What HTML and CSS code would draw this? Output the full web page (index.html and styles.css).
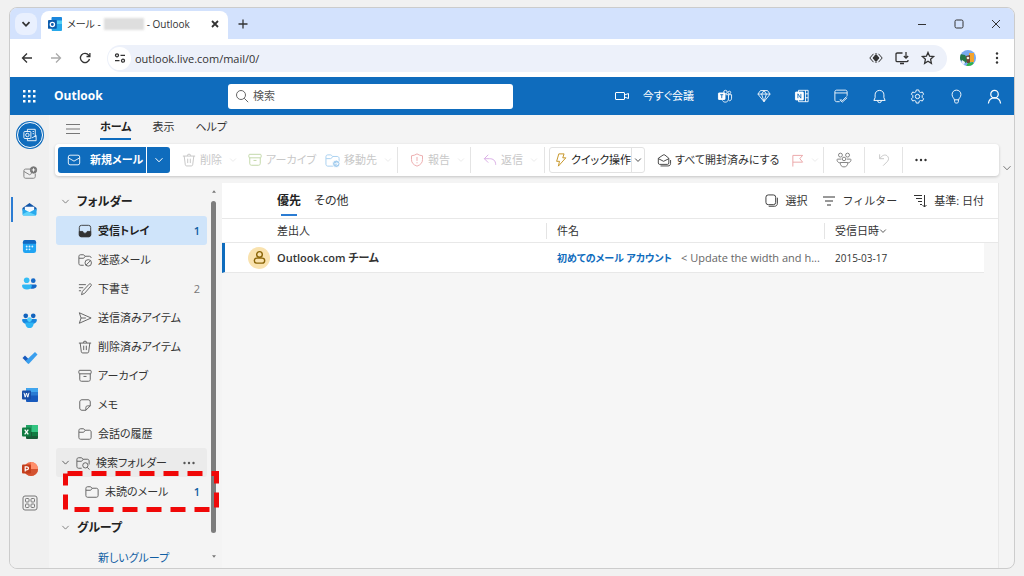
FILE: index.html
```html
<!DOCTYPE html>
<html lang="ja">
<head>
<meta charset="utf-8">
<title>メール - Outlook</title>
<link rel="stylesheet" href="styles.css">
</head>
<body>
<svg class="sprite" aria-hidden="true">
  <symbol id="chev" viewBox="0 0 10 10"><path d="M1.5 3.2 5 6.8 8.500 3.200"/></symbol>
  <symbol id="mail" viewBox="0 0 16 16"><rect x="1.500" y="2.500" width="13" height="11" rx="2"/><path d="M1.500 5.500 8 9.300l6.500-3.800"/></symbol>
  <symbol id="trash" viewBox="0 0 16 16"><path d="M1 3.500h14M6 3.300a2 2 0 0 1 4 0M2.500 3.500l1.300 10c.1.800.7 1.300 1.500 1.300h5.400c.800 0 1.400-.5 1.500-1.300l1.300-10M6.500 6.500v5M9.500 6.500v5"/></symbol>
  <symbol id="archive" viewBox="0 0 16 16"><rect x="1" y="1.500" width="14" height="4" rx="1"/><path d="M2 5.500v6.500c0 1.200.8 2 2 2h8c1.200 0 2-.8 2-2V5.500M6.300 8.500h3.400"/></symbol>
  <symbol id="folder" viewBox="0 0 16 16"><path d="M1 4c0-1.200.8-2 2-2h2.800c.5 0 .9.200 1.200.5l1.200 1.200H13c1.200 0 2 .8 2 2V12c0 1.200-.8 2-2 2H3c-1.200 0-2-.8-2-2zM1.200 6h4.600c.5 0 .9-.2 1.200-.5l1.200-1.800"/></symbol>
  <symbol id="person" viewBox="0 0 16 16"><circle cx="8" cy="5.500" r="4"/><path d="M1.500 15.500c.5-4 3-6 6.500-6s6 2 6.500 6"/></symbol>
  <symbol id="people" viewBox="0 0 18 18"><circle cx="5" cy="3.500" r="2.200"/><circle cx="13" cy="3.500" r="2.200"/><circle cx="9" cy="7.800" r="2"/><path d="M6 8H2c-1 0-1 1-.6 2 .7 1.500 1.700 2.200 3 2.200M12 8h4c1 0 1 1 .6 2-.7 1.500-1.700 2.200-3 2.200M4.700 11.800h8.600c0 3-1.500 5-4.300 5s-4.300-2-4.300-5z"/></symbol>
</svg>

<div class="window">
  <div class="tabstrip">
    <button class="tabsearch" aria-label="タブを検索"><svg viewBox="0 0 10 10" class="i10 heavy"><use href="#chev"/></svg></button>
    <div class="tab">
      <svg viewBox="0 0 16 16" class="i14 solid"><rect x="4" y="0" width="12" height="8" rx="1" fill="#1b87dc"/><rect x="10" y="4" width="6" height="5" fill="#54d0f5"/><path d="M3 8h13v6.500c0 1-.5 1.500-1.500 1.500h-10z" fill="#27a8ea"/><rect x="0" y="3.500" width="10" height="10" rx="1" fill="#0b5cad"/><circle cx="5" cy="8.500" r="2.400" fill="none" stroke="#fff" stroke-width="1.500"/></svg>
      <span class="tabtitle">メール -</span><span class="masked"></span><span class="tabtitle grow">- Outlook</span>
      <button class="close" aria-label="タブを閉じる"><svg viewBox="0 0 10 10" class="i10 heavy"><path d="M2 2l6 6M8 2 2 8"/></svg></button>
    </div>
    <button class="newtab" aria-label="新しいタブ"><svg viewBox="0 0 10 10" class="i10 mid"><path d="M5 .5v9M.5 5h9"/></svg></button>
    <div class="winctl">
      <button aria-label="最小化"><svg viewBox="0 0 10 10" class="i10"><path d="M1 5.500h8"/></svg></button>
      <button aria-label="最大化"><svg viewBox="0 0 10 10" class="i10"><rect x="1" y="1" width="8" height="8" rx="1.500"/></svg></button>
      <button aria-label="閉じる"><svg viewBox="0 0 10 10" class="i10"><path d="M1 1l8 8M9 1 1 9"/></svg></button>
    </div>
  </div>

  <div class="navbar">
    <button aria-label="戻る"><svg viewBox="0 0 12 12" class="i12 mid"><path d="M11 6H1.500M6 1.500 1.500 6 6 10.500"/></svg></button>
    <button class="off" aria-label="進む"><svg viewBox="0 0 12 12" class="i12 mid"><path d="M1 6h9.500M6 1.500 10.500 6 6 10.500"/></svg></button>
    <button aria-label="再読み込み"><svg viewBox="0 0 12 12" class="i12 mid"><path d="M10.500 7A4.600 4.600 0 1 1 9.700 3.200L10.800 4.400M10.900 1v3.500H7.500"/></svg></button>
    <div class="omnibox">
      <span class="siteinfo"><svg viewBox="0 0 12 12" class="i12 mid"><circle cx="3" cy="3.300" r="1.500"/><path d="M6.500 3.300h4.500M1 8.700h4.500"/><circle cx="9" cy="8.700" r="1.500"/></svg></span>
      <input class="url" aria-label="アドレス" value="outlook.live.com/mail/0/">
      <svg viewBox="0 0 14 12" class="i14"><path d="M4.500 1.800.8 6l3.700 4.200M9.500 1.800 13.200 6 9.500 10.200M7 1v10"/><path class="fill" d="M6.500 3 4 6l2.500 3zM7.500 3 10 6 7.500 9z"/></svg>
      <svg viewBox="0 0 14 14" class="i14 mid"><path d="M7.500 2H2.300C1.500 2 1 2.500 1 3.200v6.300c0 .7.500 1.200 1.300 1.200h9.400c.8 0 1.300-.5 1.300-1.200V9M5 12.500h4M11 1v6M8.800 5 11 7.200 13.200 5"/></svg>
      <svg viewBox="0 0 14 14" class="i14 mid"><path d="M7 1.500l1.600 3.700 4 .4-3 2.700.8 4L7 10.200l-3.400 2.100.8-4-3-2.700 4-.4z"/></svg>
    </div>
    <svg viewBox="0 0 16 16" class="i16 solid"><clipPath id="av"><circle cx="8" cy="8" r="8"/></clipPath><g clip-path="url(#av)"><rect width="16" height="16" fill="#78a9f0"/><path d="M0 4l5 1 3 5-2 3-6-3z" fill="#267848"/><rect x="9" y="3" width="5" height="9" fill="#f3a32d"/><path d="M6 6l4-1v8H7z" fill="#6d4637"/><circle cx="8" cy="8" r="1.300" fill="#f5eee0"/><path d="M8 13l5-1 1 4H6z" fill="#30b548"/><path d="M2 10l3 2-1 3H1z" fill="#e9f0fa"/></g></svg>
    <button class="more" aria-label="メニュー"><svg viewBox="0 0 12 12" class="i12 solid"><g fill="#333"><circle cx="6" cy="1.500" r="1.200"/><circle cx="6" cy="6" r="1.200"/><circle cx="6" cy="10.500" r="1.200"/></g></svg></button>
  </div>

  <header class="suite">
    <button class="waffle" aria-label="アプリ起動ツール"><svg viewBox="0 0 13 13" class="i13 solid"><g fill="#fff"><rect width="2.500" height="2.500"/><rect x="5" width="2.500" height="2.500"/><rect x="10" width="2.500" height="2.500"/><rect y="5" width="2.500" height="2.500"/><rect x="5" y="5" width="2.500" height="2.500"/><rect x="10" y="5" width="2.500" height="2.500"/><rect y="10" width="2.500" height="2.500"/><rect x="5" y="10" width="2.500" height="2.500"/><rect x="10" y="10" width="2.500" height="2.500"/></g></svg></button>
    <a class="brand" href="#">Outlook</a>
    <label class="search"><svg viewBox="0 0 14 14" class="i14"><circle cx="6" cy="6" r="4.500"/><path d="M9.200 9.200l4 4"/></svg><input type="text" aria-label="検索" placeholder="検索"></label>
    <button class="meet"><svg viewBox="0 0 14 8" class="vid"><rect x=".5" y=".5" width="9" height="7" rx=".5"/><path d="M9.500 3l4-1.500v5l-4-1.500z"/></svg>今すぐ会議</button>
    <div class="suiteicons">
      <button aria-label="Teams"><svg viewBox="0 0 16 16" class="i14"><circle cx="8.500" cy="3.500" r="2"/><circle cx="13" cy="4" r="1.500"/><path d="M9 6.500h6.500v4c0 1.800-1 3-2.800 3M5 13c.7 1.300 1.900 2 3.300 2 2.200 0 3.700-1.500 3.700-3.700V6.500"/><rect class="white" x=".5" y="4.500" width="7.500" height="7.500" rx=".6"/><path d="M2.500 6.500H6M4.300 6.500v4" stroke="#0f6cbd"/></svg></button>
      <button aria-label="Premium"><svg viewBox="0 0 16 16" class="i14"><path d="M4 1.800h8l3 4L8 14.500 1 5.800zM1 5.800h14M5.300 5.800 8 14.500l2.700-8.700L8 1.800z"/></svg></button>
      <button aria-label="OneNote"><svg viewBox="0 0 16 16" class="i14"><path d="M4 4V1.500h11v13H4V12M12 1.500v13M12 5.500h3M12 10h3"/><rect class="white" x=".5" y="3.500" width="9" height="9" rx=".6"/><path d="M3.300 10.500v-5l3.400 5v-5" stroke="#0f6cbd"/></svg></button>
      <button aria-label="タスク"><svg viewBox="0 0 16 16" class="i14"><path d="M1 4.500h14M6.500 14.500H3c-1.200 0-2-.8-2-2V3.300c0-1.200.8-2 2-2h10c1.200 0 2 .8 2 2v4.500M7.500 11.500l2 2 5-5M6.500 12.500l3 2.500 5.500-5"/></svg></button>
      <button aria-label="通知"><svg viewBox="0 0 16 16" class="i15"><path d="M8 1.500c-2.800 0-4.700 2-4.700 4.700v3L2 12.200h12l-1.300-3v-3c0-2.700-1.900-4.700-4.700-4.700zM6 12.500a2 2 0 0 0 4 0"/></svg></button>
      <button aria-label="設定"><svg viewBox="0 0 16 16" class="i15"><circle cx="8" cy="8" r="2.300"/><path d="M6.700 1h2.600l.5 2 1.400.8 2-.6 1.300 2.300L13 7v2l1.500 1.500-1.300 2.300-2-.6-1.400.8-.5 2H6.700l-.5-2-1.400-.8-2 .6-1.300-2.300L3 9V7L1.500 5.500l1.300-2.300 2 .6L6.200 3z"/></svg></button>
      <button aria-label="ヒント"><svg viewBox="0 0 16 16" class="i15"><path d="M5.700 11.500C5.500 9.800 3.300 8.900 3.300 5.800A4.600 4.600 0 0 1 8 1.200a4.600 4.600 0 0 1 4.700 4.600c0 3.100-2.200 4-2.400 5.700zM6 11.500v2c0 1 .7 1.500 2 1.500s2-.5 2-1.500v-2"/></svg></button>
      <button aria-label="アカウント"><svg viewBox="0 0 16 16" class="i15 mid"><use href="#person"/></svg></button>
    </div>
  </header>

  <div class="app">
    <nav class="rail" aria-label="アプリ">
      <a href="#" class="first" aria-label="Outlook"><span class="disc"><svg viewBox="0 0 16 16" class="i14"><path d="M5 4V1.500h9v9M5 12v2.500h10V8.500l-5 3"/><rect x="1" y="4" width="8" height="8" rx="1"/><circle cx="5" cy="8" r="2"/><path d="M11 4h1.500M11 6.500h1.500"/></svg></span></a>
      <a href="#" aria-label="新しいメール"><svg viewBox="0 0 16 16" class="i14 gray"><path d="M8.500 3.500H3c-1.200 0-2 .8-2 2V12c0 1.200.8 2 2 2h9c1.200 0 2-.8 2-2V8.500M1.200 6.300 7.500 10l2.500-1.500"/><circle cx="12" cy="4.500" r="3.700" fill="#777"/><path d="M12 2.500v4M10 4.500h4" stroke="#fff"/></svg></a>
      <a href="#" class="current" aria-label="メール"><svg viewBox="0 0 16 16" class="i15 solid"><path d="M.5 6.500 8 1l7.500 5.500V9H.5z" fill="#1456a8"/><path d="M3 5h10v6H3z" fill="#f4faff"/><path d="M.5 7 8 11l7.500-4v5.500c0 1.300-.7 2-2 2h-11c-1.300 0-2-.7-2-2z" fill="#29a9ed"/><path d="M6 10l9 4c-.4.400-.9.500-1.500.5h-11c-1 0-1.700-.5-2-1.400z" fill="#5fd3fb"/></svg></a>
      <a href="#" aria-label="予定表"><svg viewBox="0 0 16 16" class="i15 solid"><rect x="1" y="1" width="14" height="14" rx="2.500" fill="#20a4f3"/><path d="M1 5V3.500C1 2 2 1 3.500 1h9C14 1 15 2 15 3.500V5z" fill="#1267bf"/><g fill="#d9f3ff"><circle cx="5" cy="8" r="1"/><circle cx="8" cy="8" r="1"/><circle cx="11" cy="8" r="1"/><circle cx="5" cy="11" r="1"/><circle cx="8" cy="11" r="1"/></g></svg></a>
      <a href="#" aria-label="連絡先"><svg viewBox="0 0 16 16" class="i15 solid"><circle cx="5" cy="4.500" r="3" fill="#35bdf5"/><circle cx="12" cy="5" r="2.500" fill="#1569c7"/><path d="M9 9h5c1 0 1.700.6 1.700 1.500 0 1.700-1.500 3-3.700 3H9z" fill="#1569c7"/><path d="M1.500 9H9c.9 0 1.500.6 1.500 1.500 0 2.500-2 4-5.200 4S0 13 0 10.500C0 9.600.6 9 1.500 9z" fill="#30b7f4"/></svg></a>
      <a href="#" aria-label="グループ"><svg viewBox="0 0 16 16" class="i15 solid"><circle cx="4" cy="3" r="2.500" fill="#1263bd"/><circle cx="12" cy="3" r="2.500" fill="#1263bd"/><path d="M1 6.500h14c1 0 1 1 .7 2-.6 2-2.200 3-4.700 3H5c-2.500 0-4.100-1-4.700-3-.3-1-.3-2 .7-2z" fill="#1988df"/><circle cx="8" cy="7" r="2.500" fill="#54d1fa"/><path d="M3.500 10h9c0 3.500-1.500 6-4.500 6s-4.500-2.500-4.500-6z" fill="#2db5f6"/></svg></a>
      <a href="#" aria-label="To Do"><svg viewBox="0 0 16 16" class="i16 solid"><path d="M.5 8 3 5.500l5 5L5.700 13z" fill="#195abd"/><path d="M5.700 13.500 3.500 11 13 2l2.500 2.500-8.300 9c-.5.500-1 .5-1.500 0z" fill="#3a9fee"/></svg></a>
      <a href="#" aria-label="Word"><svg viewBox="0 0 16 16" class="i16 solid"><rect x="4" y="1" width="12" height="14" rx="1" fill="#185abd"/><path d="M4 5V2c0-.6.4-1 1-1h10c.6 0 1 .4 1 1v3z" fill="#41a5ee"/><rect x="4" y="5" width="12" height="3.500" fill="#2b7cd3"/><rect x="0" y="3.500" width="9" height="9" rx="1" fill="#184fa8"/><path d="M2 5.800l1.200 4.400L4.500 6l1.300 4.200L7 5.800" fill="none" stroke="#fff"/></svg></a>
      <a href="#" aria-label="Excel"><svg viewBox="0 0 16 16" class="i16 solid"><rect x="4" y="1" width="12" height="14" rx="1" fill="#185c37"/><rect x="4" y="1" width="6" height="7" fill="#21a366"/><rect x="10" y="1" width="6" height="7" fill="#33c481"/><rect x="10" y="8" width="6" height="4" fill="#107c41"/><rect x="0" y="3.500" width="9" height="9" rx="1" fill="#107c41"/><path d="M2.700 5.700l3.600 4.600M6.300 5.700l-3.600 4.600" stroke="#fff" stroke-width="1.300"/></svg></a>
      <a href="#" aria-label="PowerPoint"><svg viewBox="0 0 16 16" class="i16 solid"><circle cx="9" cy="8" r="7" fill="#ed6c47"/><path d="M9 1a7 7 0 0 1 7 7H9z" fill="#ff8f6b"/><path d="M2 8h14A7 7 0 0 1 2 8z" fill="#d35230"/><rect x="0" y="3.500" width="9" height="9" rx="1" fill="#c43e1c"/><path d="M3.200 10.500V5.800h1.600c2.200 0 2.200 3 0 3H3.500" fill="none" stroke="#fff" stroke-width="1.200"/></svg></a>
      <a href="#" class="last" aria-label="その他のアプリ"><svg viewBox="0 0 16 16" class="i16 gray"><rect x="1" y="1" width="14" height="14" rx="2"/><rect x="3.500" y="3.500" width="3.500" height="3.500" rx=".8"/><rect x="9" y="3.500" width="3.500" height="3.500" rx=".8"/><rect x="3.500" y="9" width="3.500" height="3.500" rx=".8"/><rect x="9" y="9" width="3.500" height="3.500" rx=".8"/></svg></a>
    </nav>

    <div class="work">
      <div class="ribbontabs">
        <button class="burger" aria-label="ナビゲーション"><svg viewBox="0 0 14 12" class="i14 gray"><path d="M0 1.500h14M0 6h14M0 10.500h14"/></svg></button>
        <button class="rt active">ホーム</button><button class="rt">表示</button><button class="rt">ヘルプ</button>
      </div>
      <div class="ribbonrow">
        <div class="ribbon">
          <div class="newmail"><button class="primary"><svg viewBox="0 0 16 16" class="i14"><use href="#mail"/></svg>新規メール</button><button class="primary drop" aria-label="新規作成オプション"><svg viewBox="0 0 10 10" class="i10"><use href="#chev"/></svg></button></div>
          <button class="cmd" disabled><svg viewBox="0 0 16 16" class="i14 gray"><use href="#trash"/></svg>削除<svg viewBox="0 0 10 10" class="i8"><use href="#chev"/></svg></button>
          <button class="cmd" disabled><svg viewBox="0 0 16 16" class="i14 green"><use href="#archive"/></svg>アーカイブ</button>
          <button class="cmd sep" disabled><svg viewBox="0 0 16 16" class="i15 blue"><use href="#folder"/><circle cx="12" cy="11.500" r="4" fill="#3a94dd" stroke="#fff"/><path d="M10 11.500h4M12.300 9.800l1.700 1.700-1.700 1.700" stroke="#fff"/></svg>移動先<svg viewBox="0 0 10 10" class="i8"><use href="#chev"/></svg></button>
          <button class="cmd sep" disabled><svg viewBox="0 0 16 16" class="i14 red"><path d="M8 1c2 1.300 4 2 6.300 2.200V7.500c0 3.500-2 6-6.300 7.500-4.300-1.500-6.300-4-6.300-7.500V3.200C4 3 6 2.300 8 1zM8 4.500v4.500M8 10.500v1.300"/></svg>報告<svg viewBox="0 0 10 10" class="i8"><use href="#chev"/></svg></button>
          <button class="cmd sep" disabled><svg viewBox="0 0 16 16" class="i14 purple"><path d="M6 2 1.500 6.500 6 11M1.500 6.500h6c4 0 7 2 7 7"/></svg>返信<svg viewBox="0 0 10 10" class="i8"><use href="#chev"/></svg></button>
          <div class="quick"><button><svg viewBox="0 0 14 16" class="i14 gold"><path d="M4.500 1h6L9 5.500h3.500L4 15l1.300-5.500H2z"/></svg>クイック操作</button><button class="qdrop" aria-label="クイック操作オプション"><svg viewBox="0 0 10 10" class="i8"><use href="#chev"/></svg></button></div>
          <button class="cmd"><svg viewBox="0 0 16 16" class="i14"><path d="M1.500 6 7 2.300c.6-.4 1.400-.4 2 0L13.500 6v5.500c0 1-.7 1.500-1.500 1.500H3c-.8 0-1.500-.5-1.500-1.500zM1.700 6.500 7.500 9.500l6-3M4 14.800h8.500c2 0 3-1 3-3V8"/></svg>すべて開封済みにする</button>
          <button class="cmd sep" disabled aria-label="フラグ"><svg viewBox="0 0 14 14" class="i13 red"><path d="M2 13.500v-12h10.500L9.500 5l3 3.800H2"/></svg><svg viewBox="0 0 10 10" class="i8"><use href="#chev"/></svg></button>
          <button class="cmd sep" aria-label="グループ"><svg viewBox="0 0 18 18" class="i16 gray"><use href="#people"/></svg></button>
          <button class="cmd sep" disabled aria-label="元に戻す"><svg viewBox="0 0 14 16" class="i14 gray"><path d="M2 1.500v5h5M2.200 6.300C5 2.500 8 1.500 10.300 3c2.300 1.600 2.500 4.500.7 6.500l-5 5"/></svg></button>
          <button class="cmd" aria-label="その他"><svg viewBox="0 0 12 12" class="i12 solid"><circle cx="1.500" cy="6" r="1.200"/><circle cx="6" cy="6" r="1.200"/><circle cx="10.500" cy="6" r="1.200"/></svg></button>
        </div>
        <button class="collapse" aria-label="リボンの表示"><svg viewBox="0 0 10 10" class="i10 gray"><use href="#chev"/></svg></button>
      </div>

      <div class="panes">
        <div class="folders">
          <div class="tree">
            <button class="group"><svg viewBox="0 0 10 10" class="i9 gray"><use href="#chev"/></svg>フォルダー</button>
            <a href="#" class="row selected"><svg viewBox="0 0 16 16" class="i14"><rect x="1.500" y="1.500" width="13" height="13" rx="2.500"/><path class="fill" d="M1.500 8.500H5.500c.4 1.400 1.200 2 2.500 2s2.100-.6 2.500-2h4v4c0 1.200-.8 2-2 2h-9c-1.200 0-2-.8-2-2z"/></svg><span>受信トレイ</span><b>1</b></a>
            <a href="#" class="row"><svg viewBox="0 0 16 16" class="i14"><path d="M6.500 14H3c-1.200 0-2-.8-2-2V4c0-1.200.8-2 2-2h2.800c.5 0 .9.200 1.200.5l1.200 1.200H13c1.200 0 2 .8 2 2M1.200 6h4.600c.5 0 .9-.2 1.200-.5l1.200-1.800"/><circle cx="11.700" cy="11.300" r="3.700"/><path d="M9.200 13.800l5-5"/></svg><span>迷惑メール</span></a>
            <a href="#" class="row"><svg viewBox="0 0 16 16" class="i14"><path d="M1 3h8M1 6.500h5M1 10h2.500M4 14.500l1-3.700 7.700-8.300c.6-.7 1.500-.7 2.100-.1s.6 1.500 0 2.100L7.500 13z"/></svg><span>下書き</span><i>2</i></a>
            <a href="#" class="row"><svg viewBox="0 0 16 16" class="i14"><path d="M1.500 2 15 8 1.500 14l2-6zM3.500 8H9"/></svg><span>送信済みアイテム</span></a>
            <a href="#" class="row"><svg viewBox="0 0 16 16" class="i14"><use href="#trash"/></svg><span>削除済みアイテム</span></a>
            <a href="#" class="row"><svg viewBox="0 0 16 16" class="i14"><use href="#archive"/></svg><span>アーカイブ</span></a>
            <a href="#" class="row"><svg viewBox="0 0 16 16" class="i14"><path d="M4.500 2h7c1.500 0 2.500 1 2.500 2.500V9l-5 5H4.500C3 14 2 13 2 11.500v-7C2 3 3 2 4.500 2zM14 9h-3c-1.300 0-2 .7-2 2v3"/></svg><span>メモ</span></a>
            <a href="#" class="row"><svg viewBox="0 0 16 16" class="i14"><use href="#folder"/></svg><span>会話の履歴</span></a>
            <a href="#" class="row searchf"><svg viewBox="0 0 10 10" class="i9 gray"><use href="#chev"/></svg><svg viewBox="0 0 16 16" class="i14"><path d="M6.500 14H3c-1.200 0-2-.8-2-2V4c0-1.200.8-2 2-2h2.800c.5 0 .9.200 1.200.5l1.200 1.200H13c1.200 0 2 .8 2 2v4M1.200 6h4.600c.5 0 .9-.2 1.200-.5l1.200-1.800M13 13l2.300 2.500"/><circle cx="10.700" cy="10.700" r="3"/></svg><span>検索フォルダー</span><svg viewBox="0 0 12 12" class="i12 solid"><circle cx="1.500" cy="6" r="1.200"/><circle cx="6" cy="6" r="1.200"/><circle cx="10.500" cy="6" r="1.200"/></svg></a>
            <a href="#" class="row child"><svg viewBox="0 0 16 16" class="i14"><use href="#folder"/></svg><span>未読のメール</span><b>1</b>
              <svg class="callout" viewBox="0 0 156 41"><rect x="2.500" y="2.500" width="151" height="36"/></svg></a>
            <button class="group second"><svg viewBox="0 0 10 10" class="i9 gray"><use href="#chev"/></svg>グループ</button>
            <a href="#" class="newgroup">新しいグループ</a>
          </div>
          <div class="scroll"><svg viewBox="0 0 6 4"><path d="M0 4 3 0l3 4z"/></svg><div class="thumb"></div><svg viewBox="0 0 6 4"><path d="M0 0h6L3 4z"/></svg></div>
        </div>

        <main class="messages">
          <div class="listhead">
            <button class="pivot active">優先</button><button class="pivot">その他</button>
            <div class="listtools">
              <button><svg viewBox="0 0 14 14" class="i13"><rect x="1" y="1" width="10.500" height="10.500" rx="2.500"/><path d="M4 13.200h6c2.200 0 3.300-1.100 3.300-3.300V4"/></svg>選択</button>
              <button><svg viewBox="0 0 12 12" class="i12"><path d="M0 2h12M2 6h8M4 10h4"/></svg>フィルター</button>
              <button><svg viewBox="0 0 14 14" class="i14"><path d="M1 1.500h8M3 4.500h6M5 7.500h4M7 10.500h2M11.500 1v12M9.500 11l2 2 2-2"/></svg>基準: 日付</button>
            </div>
          </div>
          <table>
            <thead><tr><th class="c1">差出人</th><th class="c2"><span>件名</span></th><th class="c3"><span>受信日時<svg viewBox="0 0 10 10" class="i8"><use href="#chev"/></svg></span></th><th class="c4"></th></tr></thead>
            <tbody><tr><td class="c1"><div class="sender"><span class="avatar"><svg viewBox="0 0 16 16" class="i15"><circle cx="8" cy="4.700" r="3"/><rect x="2.500" y="8.700" width="11" height="5.300" rx="2.600"/></svg></span>Outlook.com チーム</div></td><td class="c2"><div class="subj"><a href="#">初めてのメール アカウント</a><span>&lt; Update the width and h...</span></div></td><td class="c3">2015-03-17</td><td class="c4"></td></tr></tbody>
          </table>
        </main>
      </div>
    </div>
  </div>
</div>
</body>
</html>
```
FILE: styles.css
```css
* { box-sizing: border-box; }
body {
  margin: 0;
  height: 100vh;
  padding: 7px 9px;
  background: #f1f1f1;
  color: #333;
  font: 11px/16px "Open Sans", "Noto Sans CJK JP", sans-serif;
  font-feature-settings: "palt";
}
button, input {
  margin: 0; padding: 0; border: 0; background: none;
  font: inherit; font-feature-settings: inherit; color: inherit;
  outline: 0;
}
button { display: flex; align-items: center; white-space: nowrap; }
a { color: inherit; text-decoration: none; }
svg { fill: none; stroke: currentColor; stroke-width: 1; flex: none; display: block; overflow: visible; }
.sprite { position: absolute; width: 0; height: 0; }
.solid { stroke: none; fill: currentColor; }
.fill { fill: currentColor; }
.white { fill: #fff; }
.mid { stroke-width: 1.3px; }
.heavy { stroke-width: 1.8px; }
.i8 { width: 8px; height: 8px; }
.i9 { width: 9px; height: 9px; }
.i10 { width: 10px; height: 10px; }
.i12 { width: 12px; height: 12px; }
.i13 { width: 13px; height: 13px; }
.i14 { width: 14px; height: 14px; }
.i15 { width: 15px; height: 15px; }
.i16 { width: 16px; height: 16px; }
.gray { color: #777; }
.green { color: #6ba02c; }
.blue { color: #3a94dd; }
.red { color: #d13438; }
.purple { color: #a33cc0; }
.gold { color: #c08a10; }

.window {
  display: flex; flex-direction: column;
  height: 100%;
  border: 1px solid #ccc; border-radius: 8px;
  background: #f4f4f4;
  overflow: hidden;
}

/* browser chrome */
.tabstrip { display: flex; align-items: center; height: 31px; background: #d3e2fd; padding-left: 5px; flex: none; }
.tabsearch { width: 22px; height: 22px; border-radius: 8px; background: #e9f0fe; justify-content: center; }
.tab {
  display: flex; align-items: center; align-self: flex-end;
  width: 187px; height: 28px; margin-left: 4px; padding: 0 8px 3px 7px;
  background: #fff; border-radius: 8px 8px 0 0;
  font-size: 10px;
}
.tab .tabtitle { margin-left: 5px; white-space: nowrap; }
.tab .grow { flex: 1; margin-left: 3px; }
.masked { width: 40px; height: 12px; margin-left: 3px; background: #dedede; filter: blur(1px); }
.newtab { margin-left: 10px; }
.winctl { display: flex; margin-left: auto; }
.winctl button { width: 37px; justify-content: center; }
.navbar { display: flex; align-items: center; height: 38px; padding: 0 11px; background: #fff; flex: none; }
.navbar > button { width: 12px; margin-right: 17px; }
.navbar > button:nth-of-type(3) { margin-right: 16px; }
.navbar .off { color: #aaa; }
.navbar > .more { margin: 0 0 0 15px; }
.omnibox { display: flex; align-items: center; flex: 1; height: 27px; margin-right: 13px; padding: 0 12px 0 1px; gap: 12px; border-radius: 14px; background: #edf1fa; }
.siteinfo { display: grid; place-items: center; width: 23px; height: 23px; border-radius: 50%; background: #fff; }
.url { flex: 1; margin-left: -8px; height: 20px; }

/* suite header */
.suite { display: flex; align-items: center; height: 38px; background: #0f6cbd; color: #fff; flex: none; }
.waffle { width: 38px; justify-content: center; }
.brand { width: 174px; padding-left: 6px; font-size: 12px; font-weight: 700; }
.search { display: flex; align-items: center; width: 285px; height: 25px; margin-left: 6px; padding: 0 7px; gap: 4px; background: #fff; border-radius: 3px; color: #666; }
.search input { flex: 1; min-width: 0; }
.search input::placeholder { color: #555; opacity: 1; }
.meet { margin-left: auto; gap: 14px; }
.vid { width: 14px; height: 8px; }
.suiteicons { display: flex; width: 308px; margin-left: 12px; }
.suiteicons button { flex: 1; justify-content: center; }

.app { display: flex; flex: 1; min-height: 0; }
.rail { display: flex; flex-direction: column; width: 39px; background: #f0f0f0; flex: none; }
.rail a { display: flex; align-items: center; justify-content: center; height: 37px; flex: none; }
.rail .first { height: 39px; }
.rail .last { height: 32px; }
.rail .current { height: 25px; margin: 6px 0 6px 1px; padding-right: 3px; border-left: 2px solid #2b7cd3; }
.disc { display: grid; place-items: center; width: 26px; height: 26px; border: 1px solid #fff; border-radius: 50%; background: #0f6cbd; box-shadow: 0 0 0 1px #0f6cbd; color: #fff; }

.work { display: flex; flex-direction: column; flex: 1; min-width: 0; padding-left: 6px; }
.ribbontabs { display: flex; align-items: flex-start; height: 29px; padding-left: 11px; }
.burger { height: 27px; margin-right: 20px; }
.rt { height: 25px; margin-right: 21px; border-bottom: 2px solid transparent; }
.rt.active { border-color: #0f6cbd; font-weight: 600; color: #222; }
.ribbonrow { display: flex; align-items: flex-start; height: 32px; }
.ribbon {
  display: grid; flex: 1;
  grid-template-columns: 112px 66px 77px 85px 73px 74px 100px 134px 45px 41px 38px 1fr;
  align-items: center;
  height: 32px; padding: 0 3px;
  background: #fff; border-radius: 4px;
  box-shadow: 0 1px 3px #0003;
}
.collapse { width: 15px; height: 47px; justify-content: center; }
.newmail { display: flex; gap: 1px; height: 26px; }
.primary { gap: 9px; flex: 1; padding-left: 9px; background: #0f6cbd; color: #fff; font-weight: 600; border-radius: 3px 0 0 3px; }
.primary.drop { flex: none; width: 23px; padding: 0; justify-content: center; border-radius: 0 3px 3px 0; }
.cmd { gap: 4px; height: 26px; padding-left: 12px; }
.cmd:disabled { color: #c8c8c8; }
.cmd:disabled > svg { opacity: .45; }
.cmd .i8 { margin-left: 3px; }
.sep { border-right: 1px solid #e4e4e4; }
.quick { display: flex; height: 26px; margin-left: 4px; border: 1px solid #e2e2e2; border-radius: 3px; color: #222; }
.quick button { flex: 1; gap: 3px; padding-left: 4px; }
.quick .qdrop { flex: none; width: 13px; padding-left: 2px; border-left: 1px solid #e2e2e2; }

.panes { display: flex; flex: 1; min-height: 0; padding: 7px 15px 0 0; }
.folders { display: flex; width: 167px; flex: none; padding-left: 1px; }
.tree { width: 151px; padding-top: 4px; }
.group { height: 29px; padding-left: 5px; gap: 7px; font-size: 12px; font-weight: 600; color: #222; }
.group.second { margin-top: 7px; }
.row { position: relative; display: flex; align-items: center; height: 29px; padding: 0 7px 0 22px; gap: 6px; border-radius: 3px; }
.row > svg { color: #555; }
.row span { flex: 1; white-space: nowrap; }
.row b { color: #115ea3; font-weight: 600; }
.row i { font-style: normal; color: #777; }
.selected { background: #cfe4fa; font-weight: 600; color: #222; }
.selected > svg { color: #333; }
.searchf { padding: 0 12px 0 5px; background: #ebebeb; }
.child { padding-left: 29px; }
.row > .callout { position: absolute; left: 7px; top: -6px; width: 156px; height: 41px; color: #f00808; stroke-width: 5px; stroke-dasharray: 15px 9px; stroke-dashoffset: -2px; z-index: 2; }
.newgroup { display: block; padding: 8px 0 0 42px; color: #115ea3; }
.scroll { display: flex; flex-direction: column; align-items: center; width: 5px; margin: 7px 0 10px 4px; }
.scroll svg { width: 4px; height: 3px; fill: #777; stroke: none; }
.thumb { width: 5px; margin: 8px 0 22px; flex: 1; background: #7d7d7d; border-radius: 3px; }

.messages { flex: 1; min-width: 0; background: #f6f6f6; border-right: 1px solid #e8e8e8; }
.listhead { display: flex; align-items: center; height: 35px; padding: 0 14px 0 55px; background: #fff; }
.pivot { position: relative; height: 28px; margin-right: 13px; font-size: 12px; }
.pivot.active { font-weight: 700; color: #222; }
.pivot.active::after { content: ""; position: absolute; left: 4px; right: 4px; bottom: -1px; height: 2px; background: #2b7cd3; }
.listtools { display: flex; margin-left: auto; gap: 16px; font-feature-settings: normal; }
.listtools button { gap: 7px; }
table { width: 100%; border-collapse: separate; border-spacing: 0; table-layout: fixed; }
th, td { height: 30px; padding: 0 0 0 11px; text-align: left; background: #fff; border-bottom: 1px solid #e8e8e8; white-space: nowrap; }
th { height: 25px; padding: 0; border-top: 1px solid #e8e8e8; font-weight: 400; color: #333; }
th span { display: flex; align-items: center; height: 16px; padding-left: 10px; border-left: 1px solid #e4e4e4; }
.c1 { width: 324px; padding-left: 55px; }
.c2 { width: 278px; }
.c4 { width: 14px; }
td.c1 { border-left: 3px solid #0f6cbd; padding-left: 23px; font-weight: 600; }
td.c3 { font-size: 10px; }
td.c4 { background: #f6f6f6; border: 0; }
.sender, .subj { display: flex; align-items: center; }
.avatar { display: grid; place-items: center; width: 22px; height: 22px; margin-right: 7px; border-radius: 50%; background: #f9e2ae; color: #8a6508; }
.avatar svg { stroke-width: 1.5px; }
.subj { gap: 9px; color: #666; }
.subj a { color: #0f6cbd; font-size: 10px; font-weight: 700; }
```
